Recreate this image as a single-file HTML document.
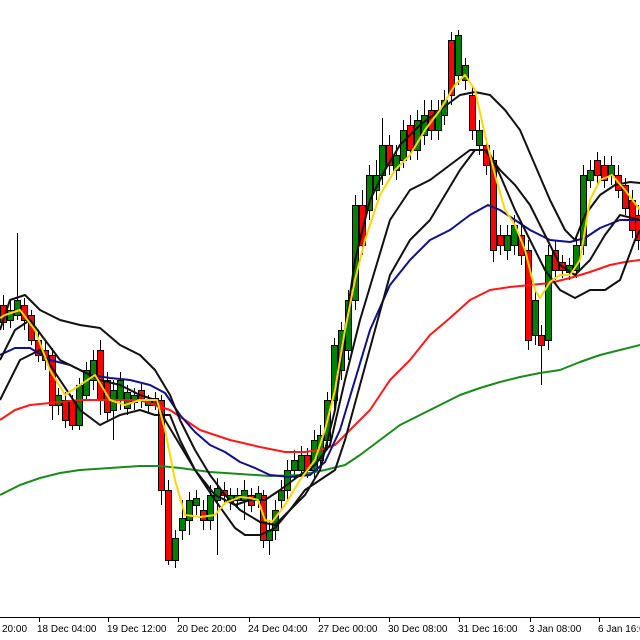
<!DOCTYPE html>
<html><head><meta charset="utf-8"><style>
html,body{margin:0;padding:0;background:#fff;width:640px;height:640px;overflow:hidden}
svg{display:block}
text{font-family:"Liberation Sans",sans-serif;font-size:10px;fill:#000}
</style></head><body>
<svg width="640" height="640" xmlns="http://www.w3.org/2000/svg" shape-rendering="crispEdges">
<path stroke="#000" fill="none" d="M3.5 295V330M10.5 300V328M17.5 233V320M24.5 298V330M31.5 310V345M38.5 330V362M45.5 342V370M52.5 348V420M58.5 388V415M65.5 392V428M72.5 395V430M79.5 378V430M86.5 362V400M93.5 350V390M100.5 340V415M107.5 372V420M113.5 380V440M120.5 372V410M127.5 385V415M134.5 388V410M141.5 384V408M148.5 395V412M155.5 392V410M161.5 395V505M168.5 480V565M175.5 530V568M182.5 500V540M189.5 492V535M196.5 490V515M203.5 500V530M210.5 485V530M217.5 478V555M224.5 482V505M230.5 488V510M237.5 488V508M244.5 480V520M251.5 488V512M258.5 486V508M263.5 490V548M269.5 520V555M275.5 500V540M281.5 480V510M287.5 460V500M294.5 450V480M301.5 446V478M307.5 448V478M314.5 430V478M320.5 425V468M327.5 392V450M334.5 338V410M341.5 322V380M348.5 290V360M355.5 195V310M362.5 190V255M369.5 165V220M376.5 160V200M382.5 118V185M389.5 135V175M396.5 145V180M403.5 120V168M410.5 115V160M417.5 110V160M424.5 100V145M431.5 100V140M438.5 100V140M444.5 90V125M451.5 32V105M458.5 30V85M465.5 58V90M472.5 85V140M479.5 120V155M486.5 138V175M493.5 150V262M500.5 225V255M507.5 225V260M514.5 215V255M521.5 225V265M528.5 240V350M535.5 290V345M541.5 325V385M548.5 245V350M555.5 240V280M562.5 255V278M569.5 258V280M576.5 238V278M583.5 165V255M590.5 160V188M597.5 152V185M604.5 156V188M611.5 156V185M618.5 165V198M625.5 178V215M632.5 190V238M638.5 205V250"/>
<path stroke="#000" fill="#ff0000" d="M0.5 305.5h6v17h-6zM21.5 305.5h6v15h-6zM28.5 315.5h6v25h-6zM35.5 340.5h6v15h-6zM42.5 350.5h6v10h-6zM49.5 355.5h6v50h-6zM62.5 400.5h6v20h-6zM69.5 400.5h6v25h-6zM97.5 350.5h6v50h-6zM104.5 380.5h6v32h-6zM138.5 390.5h6v10h-6zM152.5 398.5h6v7h-6zM158.5 400.5h6v90h-6zM165.5 490.5h6v70h-6zM200.5 510.5h6v10h-6zM221.5 490.5h6v5h-6zM248.5 495.5h6v10h-6zM260.5 495.5h6v45h-6zM304.5 455.5h6v15h-6zM359.5 205.5h6v40h-6zM386.5 145.5h6v20h-6zM407.5 125.5h6v25h-6zM428.5 110.5h6v20h-6zM448.5 40.5h6v55h-6zM469.5 95.5h6v35h-6zM483.5 145.5h6v20h-6zM490.5 160.5h6v90h-6zM497.5 235.5h6v10h-6zM518.5 235.5h6v20h-6zM525.5 250.5h6v90h-6zM538.5 335.5h6v10h-6zM552.5 250.5h6v20h-6zM559.5 262.5h6v8h-6zM594.5 160.5h6v15h-6zM601.5 165.5h6v15h-6zM615.5 175.5h6v15h-6zM622.5 185.5h6v23h-6zM629.5 200.5h6v30h-6zM635.5 215.5h6v25h-6z"/>
<path stroke="#000" fill="#008000" d="M7.5 310.5h6v10h-6zM14.5 300.5h6v15h-6zM55.5 395.5h6v10h-6zM76.5 385.5h6v40h-6zM83.5 370.5h6v25h-6zM90.5 360.5h6v20h-6zM110.5 390.5h6v20h-6zM117.5 380.5h6v20h-6zM124.5 392.5h6v16h-6zM131.5 395.5h6v7h-6zM145.5 400.5h6v5h-6zM172.5 538.5h6v22h-6zM179.5 518.5h6v12h-6zM186.5 500.5h6v20h-6zM193.5 498.5h6v7h-6zM207.5 495.5h6v25h-6zM214.5 488.5h6v12h-6zM227.5 495.5h6v7h-6zM234.5 495.5h6v5h-6zM241.5 490.5h6v10h-6zM255.5 493.5h6v7h-6zM266.5 530.5h6v10h-6zM272.5 510.5h6v20h-6zM278.5 490.5h6v10h-6zM284.5 470.5h6v20h-6zM291.5 460.5h6v10h-6zM298.5 455.5h6v15h-6zM311.5 440.5h6v30h-6zM317.5 435.5h6v25h-6zM324.5 400.5h6v40h-6zM331.5 345.5h6v55h-6zM338.5 330.5h6v40h-6zM345.5 300.5h6v50h-6zM352.5 205.5h6v95h-6zM366.5 175.5h6v35h-6zM373.5 175.5h6v15h-6zM379.5 145.5h6v30h-6zM393.5 155.5h6v15h-6zM400.5 130.5h6v30h-6zM414.5 120.5h6v30h-6zM421.5 115.5h6v20h-6zM435.5 110.5h6v20h-6zM441.5 100.5h6v15h-6zM455.5 35.5h6v40h-6zM462.5 65.5h6v15h-6zM476.5 130.5h6v15h-6zM504.5 235.5h6v15h-6zM511.5 225.5h6v20h-6zM532.5 300.5h6v35h-6zM545.5 255.5h6v85h-6zM566.5 265.5h6v7h-6zM573.5 245.5h6v25h-6zM580.5 175.5h6v70h-6zM587.5 170.5h6v10h-6zM608.5 165.5h6v10h-6z"/>
<g fill="none" stroke-width="2" shape-rendering="auto" stroke-linejoin="round">
<polyline stroke="#1a8a1a" points="0,495 20,485 40,478 60,473 80,470 110,468 140,466 160,466 180,468 210,472 240,474 270,476 300,475 325,470 345,465 360,455 380,440 400,425 420,415 440,405 460,395 480,388 500,382 520,377 540,373 560,370 580,362 600,355 620,350 640,345"/>
<polyline stroke="#ff1a1a" points="0,420 15,410 30,405 50,403 80,400 110,400 140,400 170,410 200,430 230,440 260,447 285,452 305,452 320,450 335,445 350,430 370,410 390,380 410,360 430,335 450,318 470,300 490,290 510,287 530,285 550,283 570,278 590,272 610,265 625,262 640,260"/>
<polyline stroke="#10108a" points="0,355 15,348 30,348 50,360 70,365 90,375 110,378 130,380 150,385 165,393 180,415 195,432 210,445 225,452 240,462 255,468 270,475 290,477 310,475 325,462 340,430 355,380 370,330 390,285 410,260 430,240 450,230 470,215 488,205 500,210 515,220 530,230 550,240 570,242 585,238 600,228 620,220 640,220"/>
<polyline stroke="#111" points="0,330 10,300 25,295 40,310 60,320 80,325 100,328 120,345 140,355 155,370 170,395 180,420 195,450 210,475 225,495 240,510 260,522 275,525 290,510 305,495 320,470 335,410 345,330 355,260 370,200 385,170 400,145 420,125 440,110 460,95 475,92 490,95 505,110 520,130 535,165 550,200 565,230 575,240 585,215 600,195 615,185 630,182 640,183"/>
<polyline stroke="#111" points="0,360 15,330 30,320 45,340 60,360 80,370 100,380 120,385 140,395 155,400 165,420 180,445 195,470 215,495 235,505 250,500 265,500 280,490 300,475 315,465 330,445 345,380 360,320 375,270 390,220 410,190 430,180 450,165 470,150 485,150 500,170 515,185 530,205 545,235 560,265 575,275 590,260 605,235 620,215 640,220"/>
<polyline stroke="#111" points="0,400 20,360 40,350 60,380 80,410 100,425 120,415 140,410 155,415 170,415 180,440 195,470 215,500 235,528 245,535 260,535 275,528 290,510 305,490 320,480 335,470 345,440 360,385 375,330 390,275 410,240 430,220 445,195 460,170 475,150 488,150 500,175 515,210 530,240 545,270 560,290 575,298 590,290 605,290 620,280 635,240 640,230"/>
<polyline stroke="#ffd700" points="0,318 5,315 20,310 35,330 50,370 65,395 80,385 95,375 110,400 125,405 140,400 157,400 165,430 175,480 185,515 200,517 215,515 225,503 240,497 250,498 258,500 265,520 272,522 285,505 300,480 315,460 325,430 335,390 345,330 355,280 365,240 380,195 395,170 410,155 425,130 440,110 455,85 465,75 475,90 485,135 495,175 505,210 515,225 525,250 535,290 540,298 550,282 560,275 570,275 580,260 590,200 600,180 612,175 625,190 640,210"/>
</g>
<line x1="0" y1="617.5" x2="640" y2="617.5" stroke="#000"/>
<g stroke="#000">
<line x1="39.5" y1="617" x2="39.5" y2="622"/><line x1="108.5" y1="617" x2="108.5" y2="622"/><line x1="178.5" y1="617" x2="178.5" y2="622"/><line x1="249.5" y1="617" x2="249.5" y2="622"/><line x1="319.5" y1="617" x2="319.5" y2="622"/><line x1="389.5" y1="617" x2="389.5" y2="622"/><line x1="459.5" y1="617" x2="459.5" y2="622"/><line x1="530.5" y1="617" x2="530.5" y2="622"/><line x1="599.5" y1="617" x2="599.5" y2="622"/>
</g>
<text x="2" y="632">20:00</text><text x="37" y="632">18 Dec 04:00</text><text x="107" y="632">19 Dec 12:00</text><text x="177" y="632">20 Dec 20:00</text><text x="248" y="632">24 Dec 04:00</text><text x="318" y="632">27 Dec 00:00</text><text x="388" y="632">30 Dec 08:00</text><text x="458" y="632">31 Dec 16:00</text><text x="529" y="632">3 Jan 08:00</text><text x="598" y="632">6 Jan 16:00</text>
</svg>
</body></html>
